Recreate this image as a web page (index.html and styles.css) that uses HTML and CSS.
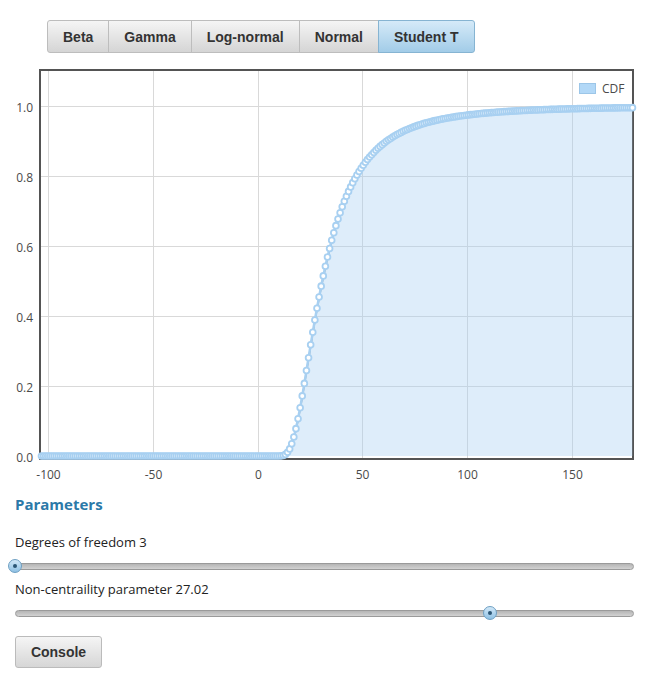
FILE: index.html
```html
<!DOCTYPE html>
<html lang="en">
<head>
<meta charset="utf-8">
<title>Distributions</title>
<link rel="stylesheet" href="styles.css">
</head>
<body>
<div class="tabs">
  <button class="tab">Beta</button>
  <button class="tab">Gamma</button>
  <button class="tab">Log-normal</button>
  <button class="tab">Normal</button>
  <button class="tab active">Student T</button>
</div>

<svg class="chart" id="chart" width="650" height="425" viewBox="0 0 650 425">
  <g class="grid">
    <line x1="48.5" y1="11" x2="48.5" y2="398"/>
    <line x1="153.5" y1="11" x2="153.5" y2="398"/>
    <line x1="258.5" y1="11" x2="258.5" y2="398"/>
    <line x1="362.5" y1="11" x2="362.5" y2="398"/>
    <line x1="467.5" y1="11" x2="467.5" y2="398"/>
    <line x1="572.5" y1="11" x2="572.5" y2="398"/>
    <line x1="41" y1="46.5" x2="632" y2="46.5"/>
    <line x1="41" y1="116.5" x2="632" y2="116.5"/>
    <line x1="41" y1="186.5" x2="632" y2="186.5"/>
    <line x1="41" y1="256.5" x2="632" y2="256.5"/>
    <line x1="41" y1="326.5" x2="632" y2="326.5"/>
  </g>
  <rect class="frame" x="40" y="10" width="593" height="389"/>
  <g class="ylabels">
    <text x="33" y="51.5">1.0</text>
    <text x="33" y="121.5">0.8</text>
    <text x="33" y="191.5">0.6</text>
    <text x="33" y="261.5">0.4</text>
    <text x="33" y="331.5">0.2</text>
    <text x="33" y="401.5">0.0</text>
  </g>
  <g class="xlabels">
    <text x="48.5" y="419">-100</text>
    <text x="153.5" y="419">-50</text>
    <text x="258.5" y="419">0</text>
    <text x="362.5" y="419">50</text>
    <text x="467.5" y="419">100</text>
    <text x="572.5" y="419">150</text>
  </g>
  <g id="series"></g>
  <g class="legend">
    <rect x="579.5" y="23.5" width="16" height="10"/>
    <text x="602" y="33">CDF</text>
  </g>
</svg>

<section class="params">
  <h2 class="params-title">Parameters</h2>
  <div class="field">
    <div class="field-label">Degrees of freedom 3</div>
    <div class="slider">
      <div class="track"></div>
      <div class="thumb" style="left: 0%"></div>
    </div>
  </div>
  <div class="field">
    <div class="field-label">Non-centraility parameter 27.02</div>
    <div class="slider">
      <div class="track"></div>
      <div class="thumb" style="left: 76.7%"></div>
    </div>
  </div>
  <button class="console">Console</button>
</section>

<script src="script.js"></script>
</body>
</html>
```

FILE: styles.css
```css
html, body {
  margin: 0;
  padding: 0;
  background: #ffffff;
}

body {
  font-family: "Open Sans", "DejaVu Sans", sans-serif;
  color: #333;
  width: 650px;
}

.tabs {
  display: flex;
  margin: 20px 0 0 47px;
  height: 33px;
}

.tab {
  font: bold 14px "Liberation Sans", Arial, sans-serif;
  color: #333;
  height: 33px;
  padding: 0 15px;
  margin: 0 0 0 -1px;
  border: 1px solid #bdbdbd;
  background: linear-gradient(#f5f5f5, #d5d5d5);
  border-radius: 0;
  cursor: pointer;
}

.tab:first-child {
  margin-left: 0;
  border-radius: 3px 0 0 3px;
}

.tab:last-child {
  border-radius: 0 3px 3px 0;
}

.tab.active {
  background: linear-gradient(#d5eaf8, #a2cce8);
  border-color: #86b4d2;
  position: relative;
  z-index: 1;
}

.chart {
  display: block;
  margin-top: 7px;
}

.grid line {
  stroke: #d9d9d9;
  stroke-width: 1;
}

.frame {
  fill: none;
  stroke: #545454;
  stroke-width: 2;
}

.ylabels text,
.xlabels text,
.legend text {
  font-family: "Open Sans", "DejaVu Sans", sans-serif;
  font-size: 12px;
  fill: #4a4a4a;
}

.ylabels text {
  text-anchor: end;
}

.xlabels text {
  text-anchor: middle;
}

.legend rect {
  fill: #b2d8f7;
  stroke: #9cc6e8;
  stroke-width: 1;
}

.area {
  fill: rgba(167, 208, 242, 0.38);
  stroke: none;
}

.line-shadow {
  fill: none;
  stroke: rgba(70, 90, 110, 0.55);
  stroke-width: 1.5;
}

.line {
  fill: none;
  stroke: #a8d0f1;
  stroke-width: 2.5;
}

.marker {
  fill: #ffffff;
  stroke: #a8d0f1;
  stroke-width: 1.8;
}

.params {
  margin-top: 9px;
  padding: 0 16px 0 15px;
}

.params-title {
  margin: 0;
  font: bold 15px/20px "Open Sans", "DejaVu Sans", sans-serif;
  color: #2b79a8;
}

.field {
  margin-top: 19px;
}

.field + .field {
  margin-top: 7px;
}

.field-label {
  font-size: 13px;
  line-height: 18px;
  color: #222;
}

.slider {
  position: relative;
  height: 14px;
  margin-top: 8px;
  display: flex;
  align-items: center;
}

.track {
  flex: 1;
  height: 5px;
  border: 1px solid #9a9a9a;
  border-radius: 4px;
  background: linear-gradient(#b5b5b5, #d2d2d2);
}

.thumb {
  position: absolute;
  top: 0;
  width: 14px;
  height: 14px;
  box-sizing: border-box;
  margin-left: -7px;
  border-radius: 50%;
  border: 1px solid #6d9fc3;
  background: linear-gradient(#d2e8f8, #8fc1e4);
  display: flex;
  align-items: center;
  justify-content: center;
}

.thumb::after {
  content: "";
  width: 4px;
  height: 4px;
  border-radius: 50%;
  background: #2b5574;
}

.console {
  display: block;
  margin-top: 16px;
  width: 87px;
  height: 32px;
  font: bold 14px "Liberation Sans", Arial, sans-serif;
  color: #333;
  border: 1px solid #bbbbbb;
  border-radius: 3px;
  background: linear-gradient(#f5f5f5, #d6d6d6);
  cursor: pointer;
}
```

FILE: script.js
```js
(function () {
  var NS = "http://www.w3.org/2000/svg";
  var series = document.getElementById("series");
  var df = 3, ncp = 27.02;

  function X(v) { return 258.5 + 2.095 * v; }
  function Y(p) { return 396 - 350 * p; }

  function erf(x) {
    var s = x < 0 ? -1 : 1;
    x = Math.abs(x);
    var t = 1 / (1 + 0.3275911 * x);
    var y = 1 - (((((1.061405429 * t - 1.453152027) * t) + 1.421413741) * t - 0.284496736) * t + 0.254829592) * t * Math.exp(-x * x);
    return s * y;
  }
  function Phi(z) { return 0.5 * (1 + erf(z / Math.SQRT2)); }

  var n = 1600, h = 10 / n, weights = [], dens = [];
  for (var i = 0; i <= n; i++) {
    var u = i * h;
    weights.push((i === 0 || i === n) ? 1 : (i % 2 ? 4 : 2));
    dens.push(2 * u * u * Math.exp(-u * u / 2) / Math.sqrt(2 * Math.PI));
  }
  function cdf(t) {
    var sum = 0, k = t / Math.sqrt(df);
    for (var i = 0; i <= n; i++) {
      var d = dens[i];
      if (d < 1e-14) continue;
      sum += weights[i] * d * Phi(k * i * h - ncp);
    }
    return Math.min(1, Math.max(0, sum * h / 3));
  }

  var lo = -103.6, hi = 178.5, N = 282, pts = [];
  for (var j = 0; j < N; j++) {
    var v = lo + (hi - lo) * j / (N - 1);
    var p = v <= 0 ? 0 : cdf(v);
    pts.push([X(v), Y(p)]);
  }

  function el(name, attrs) {
    var e = document.createElementNS(NS, name);
    for (var a in attrs) e.setAttribute(a, attrs[a]);
    series.appendChild(e);
    return e;
  }

  var line = pts.map(function (q, i) { return (i ? "L" : "M") + q[0].toFixed(2) + "," + q[1].toFixed(2); }).join("");
  el("path", { "class": "area", d: line + "L" + pts[N - 1][0].toFixed(2) + "," + Y(0) + "L" + pts[0][0].toFixed(2) + "," + Y(0) + "Z" });
  el("path", { "class": "line-shadow", d: line, transform: "translate(0,1.6)" });
  el("path", { "class": "line", d: line });
  pts.forEach(function (q) {
    el("circle", { "class": "marker", cx: q[0].toFixed(2), cy: q[1].toFixed(2), r: 2.9 });
  });
})();
```
